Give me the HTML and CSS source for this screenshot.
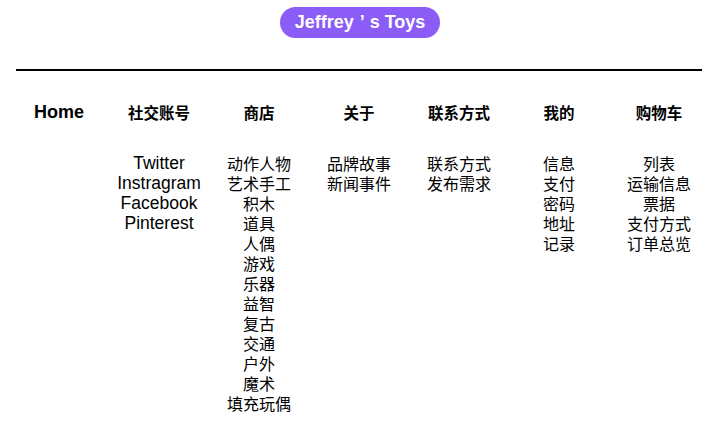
FILE: index.html
```html
<!DOCTYPE html>
<html lang="zh">
<head>
<meta charset="utf-8">
<link rel="stylesheet" href="styles.css">
</head>
<body>
<header class="top">
  <div class="logo">Jeffrey<span class="apos">’</span>s Toys</div>
</header>
<nav class="nav">
  <div class="col">
    <div class="head head-en">Home</div>
  </div>
  <div class="col">
    <div class="head">社交账号</div>
    <ul class="items items-en">
      <li>Twitter</li><li>Instragram</li><li>Facebook</li><li>Pinterest</li>
    </ul>
  </div>
  <div class="col">
    <div class="head">商店</div>
    <ul class="items">
      <li>动作人物</li><li>艺术手工</li><li>积木</li><li>道具</li><li>人偶</li><li>游戏</li><li>乐器</li><li>益智</li><li>复古</li><li>交通</li><li>户外</li><li>魔术</li><li>填充玩偶</li>
    </ul>
  </div>
  <div class="col">
    <div class="head">关于</div>
    <ul class="items">
      <li>品牌故事</li><li>新闻事件</li>
    </ul>
  </div>
  <div class="col">
    <div class="head">联系方式</div>
    <ul class="items">
      <li>联系方式</li><li>发布需求</li>
    </ul>
  </div>
  <div class="col">
    <div class="head">我的</div>
    <ul class="items">
      <li>信息</li><li>支付</li><li>密码</li><li>地址</li><li>记录</li>
    </ul>
  </div>
  <div class="col">
    <div class="head">购物车</div>
    <ul class="items">
      <li>列表</li><li>运输信息</li><li>票据</li><li>支付方式</li><li>订单总览</li>
    </ul>
  </div>
</nav>
</body>
</html>
```
FILE: styles.css
```css
* { box-sizing: border-box; }
body {
  margin: 0;
  background: #fff;
  color: #000;
  font-family: "Liberation Sans", "Noto Sans CJK SC", sans-serif;
}
.top {
  display: flex;
  justify-content: center;
  padding-top: 7px;
  margin: 0 18px 0 16px;
  padding-bottom: 31px;
  border-bottom: 2px solid #000;
}
.logo {
  width: 160px;
  height: 31px;
  border-radius: 16px;
  background: #8b5cf6;
  color: #fff;
  font-family: "Liberation Sans", "Noto Sans CJK SC", sans-serif;
  font-weight: bold;
  font-size: 18px;
  display: flex;
  align-items: center;
  justify-content: center;
  margin-left: 2px;
  white-space: pre;
}
.apos {
  margin: 0 5px 0 6px;
}
.nav {
  display: grid;
  grid-template-columns: repeat(7, 100px);
  padding-left: 9px;
  padding-top: 31px;
}
.col {
  display: flex;
  flex-direction: column;
  align-items: center;
  text-align: center;
}
.head {
  font-family: "Noto Sans CJK SC", sans-serif;
  font-weight: bold;
  font-size: 15.5px;
  line-height: 20px;
  height: 20px;
}
.head-en {
  font-family: "Liberation Sans", sans-serif;
  font-size: 18px;
}
.items {
  list-style: none;
  margin: 31px 0 0;
  padding: 0;
  font-family: "Noto Sans CJK SC", sans-serif;
  font-size: 16px;
  line-height: 20px;
}
.items li { height: 20px; white-space: nowrap; }
.items-en {
  font-family: "Liberation Sans", sans-serif;
  font-size: 17.5px;
}
```
